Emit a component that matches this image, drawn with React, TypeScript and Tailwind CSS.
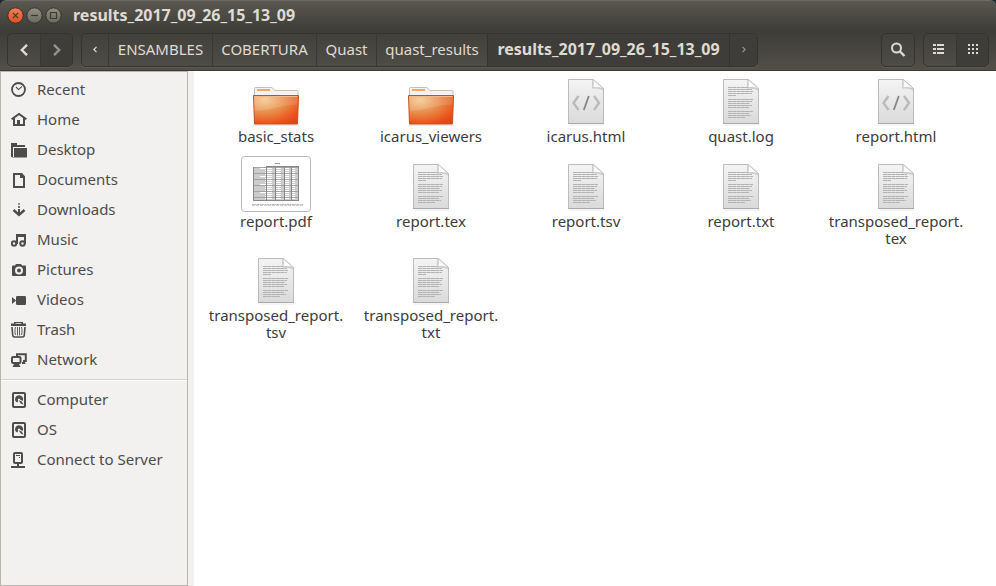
import { Fragment, useState, type ReactNode } from "react";

type IconName =
  | "recent" | "home" | "desktop" | "documents" | "downloads" | "music"
  | "pictures" | "videos" | "trash" | "network" | "drive" | "server";

const glyphs: Record<IconName, ReactNode> = {
  recent: (
    <>
      <circle cx="7.5" cy="7.5" r="6.5" fill="none" stroke="currentColor" strokeWidth="1.8" />
      <path d="M5 5l2.6 2.6L11 4.4" fill="none" stroke="currentColor" strokeWidth="1.1" />
    </>
  ),
  home: (
    <>
      <path d="M.6 7.2L8 1.9l7.4 5.3" fill="none" stroke="currentColor" strokeWidth="2" />
      <path d="M3 6v7h10V6" fill="none" stroke="currentColor" strokeWidth="2" />
      <path d="M6 13.5V8h3v5.5z" />
    </>
  ),
  desktop: (
    <>
      <path d="M0 1h6v2h8v2H2v10H0z" />
      <path d="M3 7V6h13v9.500H1V15h2z" />
    </>
  ),
  documents: (
    <>
      <path d="M3 2h7l3 3v10H3z" fill="none" stroke="currentColor" strokeWidth="2" />
      <path d="M9 1h2l3 3.500V6H9z" />
    </>
  ),
  downloads: (
    <>
      <path d="M7 1h2v2H7z" opacity=".6" />
      <path d="M7 4h2v2H7z" opacity=".8" />
      <path d="M7 7h2v4H7z" />
      <path d="M2.500 8L8 13l5.500-5" fill="none" stroke="currentColor" strokeWidth="2.400" />
    </>
  ),
  music: (
    <>
      <circle cx="3" cy="11.500" r="2.200" fill="none" stroke="currentColor" strokeWidth="2" />
      <circle cx="11.500" cy="11.500" r="2.200" fill="none" stroke="currentColor" strokeWidth="2" />
      <path d="M5 2h10v10h-2V5H7v7H5z" />
    </>
  ),
  pictures: (
    <path
      fillRule="evenodd"
      d="M5 2h5l1 1.500h3a1 1 0 0 1 1 1V13a1 1 0 0 1-1 1H2a1 1 0 0 1-1-1V4.500a1 1 0 0 1 1-1h2zM8 4.500a4 4 0 1 0 0 8 4 4 0 0 0 0-8zm0 2a2 2 0 1 1 0 4 2 2 0 0 1 0-4z"
    />
  ),
  videos: (
    <>
      <rect x="5" y="4" width="10" height="9" rx="1.200" />
      <path d="M1 5l4 3.500L1 12z" />
    </>
  ),
  trash: (
    <>
      <path d="M3 0h9v1.500h3V4H0V1.500h3zM4.500 1.200v.8h6v-.8z" fillRule="evenodd" />
      <path d="M1 5l.7 8c.1 1.200.8 2 1.800 2h8c1 0 1.700-.8 1.800-2l.7-8" fill="none" stroke="currentColor" strokeWidth="1.600" />
      <path d="M4.500 5c-.8 3-.6 5.500 0 8M6.500 5v8.500M8.500 5v8.500M10.500 5c.8 3 .6 5.500 0 8" fill="none" stroke="currentColor" strokeWidth=".9" />
    </>
  ),
  network: (
    <>
      <path d="M6 4V2.200h8.800V9H12" fill="none" stroke="currentColor" strokeWidth="2" />
      <path d="M11 10h3v1.500h1V12h-4z" />
      <rect x="1" y="5" width="8.500" height="6" rx="1" fill="none" stroke="currentColor" strokeWidth="2" />
      <path d="M3 12h5l1.500 3h-8z" />
    </>
  ),
  drive: (
    <>
      <rect x="2" y="1" width="12" height="14" rx="1" fill="none" stroke="currentColor" strokeWidth="2" />
      <path d="M8 3.200a4 4 0 0 0-3 6.600L6.500 10.500l.7-2A1.100 1.100 0 1 1 9 7.400L11.700 9A4 4 0 0 0 8 3.200z" />
      <path d="M7.800 8.200l3 1.300 1.700 3.200-2.800-1.200z" />
    </>
  ),
  server: (
    <>
      <rect x="3" y="1" width="8" height="10" rx="1" fill="none" stroke="currentColor" strokeWidth="2" />
      <path d="M5 3h4v1H5zM8 5h1v1H8zM6 11h2v3H6zM0 14h14v2H0z" />
    </>
  ),
};

const places: { label: string; icon: IconName }[] = [
  { label: "Recent", icon: "recent" },
  { label: "Home", icon: "home" },
  { label: "Desktop", icon: "desktop" },
  { label: "Documents", icon: "documents" },
  { label: "Downloads", icon: "downloads" },
  { label: "Music", icon: "music" },
  { label: "Pictures", icon: "pictures" },
  { label: "Videos", icon: "videos" },
  { label: "Trash", icon: "trash" },
  { label: "Network", icon: "network" },
];

const devices: { label: string; icon: IconName }[] = [
  { label: "Computer", icon: "drive" },
  { label: "OS", icon: "drive" },
  { label: "Connect to Server", icon: "server" },
];

type FileKind = "folder" | "html" | "text" | "pdf";

const files: { name: string; kind: FileKind }[] = [
  { name: "basic_stats", kind: "folder" },
  { name: "icarus_viewers", kind: "folder" },
  { name: "icarus.html", kind: "html" },
  { name: "quast.log", kind: "text" },
  { name: "report.html", kind: "html" },
  { name: "report.pdf", kind: "pdf" },
  { name: "report.tex", kind: "text" },
  { name: "report.tsv", kind: "text" },
  { name: "report.txt", kind: "text" },
  { name: "transposed_report.tex", kind: "text" },
  { name: "transposed_report.tsv", kind: "text" },
  { name: "transposed_report.txt", kind: "text" },
];

function PlaceList({ items }: { items: { label: string; icon: IconName }[] }) {
  return (
    <ul>
      {items.map((p) => (
        <li key={p.label}>
          <a href="#" className="flex h-[30px] items-center gap-[10px] pl-[10px]">
            <svg className="size-4 shrink-0" viewBox="0 0 16 16" fill="currentColor" aria-hidden="true">
              {glyphs[p.icon]}
            </svg>
            <span className="pb-[2px]">{p.label}</span>
          </a>
        </li>
      ))}
    </ul>
  );
}

function FolderIcon() {
  return (
    <svg className="size-12" viewBox="0 0 48 48" aria-hidden="true">
      <path d="M1 45.500h46v1.500H1z" fill="#000" opacity=".08" />
      <path d="M2.500 18V9.500q0-1 1-1H19q1 0 1.700.8l2.300 2.200h22q1 0 1 1V18z" fill="#f3f3f1" stroke="#c2c0bc" />
      <path d="M5 10h13v2H5z" fill="#f4a56c" />
      <path d="M1.500 16.500h45L45.500 45h-43z" fill="url(#folderFill)" stroke="#c6501f" />
      <path d="M2.500 17.500h43" stroke="#f3b488" />
      <path d="M2 17.500h44l-.3 8C31 26 18 31 2.400 32z" fill="#fff" opacity=".12" />
    </svg>
  );
}

const pageLines: [number, number][] = [
  [8.5, 25], [10.5, 24], [12.5, 25], [14.5, 24], [16.5, 8],
  [20.5, 25], [22.5, 24], [24.5, 22], [26.5, 24], [28.5, 21],
  [32.5, 25], [34.5, 21], [36.5, 23], [38.5, 17],
];

function PageIcon({ kind }: { kind: "html" | "text" }) {
  return (
    <svg className="size-12" viewBox="0 0 48 48" aria-hidden="true">
      <path d="M7 45.500h35v1H7z" fill="#000" opacity=".08" />
      <path d="M6.500.5h25L41.500 9.500v35h-35z" fill="url(#pageFill)" stroke="#bcbcbc" />
      <path d="M6 44.500h36" stroke="#a9a9a9" />
      {kind === "html" ? (
        <g fill="none">
          <path d="M16.500 17l-5 7 5 7M32 17l5 7-5 7" stroke="#bababa" strokeWidth="2.400" />
          <path d="M26.800 17l-5 14" stroke="#858585" strokeWidth="1.800" />
        </g>
      ) : (
        <g stroke="#b2b2b2" strokeDasharray="4 .3">
          {pageLines.map(([y, w]) => (
            <path key={y} d={`M11 ${y}h${w}`} />
          ))}
        </g>
      )}
      <path d="M30 1l1 0 10 8.500v2c-4-2-7-2-11-2z" fill="#999" opacity=".35" />
      <path d="M31 .5c.6 3 .4 6-.2 8.300 3-.5 7-.2 10.700.9z" fill="#fcfcfc" stroke="#c0c0c0" strokeWidth=".7" />
    </svg>
  );
}

function PdfThumbnail() {
  const rows = Array.from({ length: 17 }, (_, i) => 11 + i * 2);
  return (
    <svg className="h-14 w-[70px]" viewBox="0 0 70 56" aria-hidden="true">
      <rect x=".5" y=".5" width="69" height="55" rx="3" fill="#fff" stroke="#b9b8b4" />
      <path d="M34 7.500h5" stroke="#999" />
      <path d="M25 10.500h33" stroke="#888" />
      {rows.map((y, i) => (
        <g key={y}>
          <path d={`M12 ${y + 0.5}h46`} stroke={i % 3 === 0 ? "#a5a5a5" : "#cecece"} />
          <path d={`M13 ${y + 1.5}h${i % 4 === 0 ? 6 : 11}M31 ${y + 1.5}h3M40 ${y + 1.5}h3M48 ${y + 1.5}h3M54 ${y + 1.5}h3`} stroke="#999" opacity=".5" />
        </g>
      ))}
      <path d="M12.500 11v34M25.500 10v35M34.500 10v35M43.500 10v35M50.500 10v35M57.500 10v35M12 44.500h46" fill="none" stroke="#888" />
      <path d="M11 48.500h51" stroke="#b4b4b4" strokeDasharray="2 .5" />
      <path d="M11 49.500h51" stroke="#ccc" strokeDasharray="3 1" />
    </svg>
  );
}

function FileIcon({ kind }: { kind: FileKind }) {
  if (kind === "folder") return <FolderIcon />;
  if (kind === "pdf") return <PdfThumbnail />;
  return <PageIcon kind={kind} />;
}

/* Lets a long file name break after its dots. */
function FileName({ name }: { name: string }) {
  return (
    <span className="max-w-[140px] pt-px pb-[11px] text-center">
      {name.split(".").map((part, i) => (
        <Fragment key={i}>
          {i > 0 && (
            <>
              .<wbr />
            </>
          )}
          {part}
        </Fragment>
      ))}
    </span>
  );
}

const groupClass =
  "flex h-[34px] overflow-hidden rounded-[5px] border border-[#34332f] bg-linear-to-b from-[#42413c] to-[#4e4c46] shadow-[0_1px_0_#5c5a53]";
const pressedClass = "bg-[#3e3d39]";

const crumbs = [
  { label: "ENSAMBLES", width: "w-[104px]" },
  { label: "COBERTURA", width: "w-[104px]" },
  { label: "Quast", width: "w-[60px]" },
  { label: "quast_results", width: "w-[111px]" },
];

function Chevron({ dir, small, dim }: { dir: "left" | "right"; small?: boolean; dim?: boolean }) {
  return (
    <svg
      className={small ? "h-[7px] w-1" : "h-3 w-2"}
      viewBox="0 0 8 12"
      fill="none"
      stroke={dim ? "#96948c" : "#dfdbd2"}
      strokeWidth="2.400"
      aria-hidden="true"
    >
      <path d={dir === "left" ? "M7 .8L1.800 6 7 11.200" : "M1 .8L6.200 6 1 11.200"} />
    </svg>
  );
}

function WindowButton({ label, fill, d }: { label: string; fill: string; d: string }) {
  return (
    <button aria-label={label} className="size-[17px]">
      <svg viewBox="0 0 17 17" aria-hidden="true">
        <circle cx="8.500" cy="8.500" r="7.700" fill={fill} stroke="#34332f" />
        <path d={d} fill="none" stroke="#3a3934" strokeWidth="1.200" />
      </svg>
    </button>
  );
}

export default function App() {
  const [view, setView] = useState<"list" | "grid">("grid");
  return (
    <div className="flex h-screen flex-col bg-white font-['Noto_Sans',sans-serif] text-[15px] leading-[17px] text-[#4c4c4c]">
      <svg className="absolute size-0" aria-hidden="true">
        <defs>
          <radialGradient id="folderFill" cx=".25" cy=".15" r="1">
            <stop offset="0" stopColor="#f5cb92" />
            <stop offset=".45" stopColor="#e88e4b" />
            <stop offset=".85" stopColor="#ec5019" />
            <stop offset="1" stopColor="#dc4a17" />
          </radialGradient>
          <linearGradient id="pageFill" x1="0" y1="0" x2="0" y2="1">
            <stop offset="0" stopColor="#f4f4f4" />
            <stop offset="1" stopColor="#dadada" />
          </linearGradient>
          <linearGradient id="closeFill" x1="0" y1="0" x2="0" y2="1">
            <stop offset="0" stopColor="#f58059" />
            <stop offset="1" stopColor="#e2511d" />
          </linearGradient>
          <linearGradient id="plainFill" x1="0" y1="0" x2="0" y2="1">
            <stop offset="0" stopColor="#92907f" />
            <stop offset="1" stopColor="#6a6861" />
          </linearGradient>
        </defs>
      </svg>

      <div className="shrink-0 bg-[#1a2a30]">
        <header className="flex h-[29px] items-center rounded-t-[6px] border-t border-[#6b6961] bg-linear-to-b from-[#5a5850] to-[#3f3e39] pl-[7px]">
          <div className="flex gap-[2px]">
            <WindowButton label="Close" fill="url(#closeFill)" d="M5.800 5.800l5.400 5.400M11.200 5.800l-5.400 5.400" />
            <WindowButton label="Minimize" fill="url(#plainFill)" d="M5 8.500h7" />
            <WindowButton label="Maximize" fill="url(#plainFill)" d="M5.500 5.500h6v6h-6z" />
          </div>
          <h1 className="pl-[11px] text-[16px] font-bold text-[#dfdbd2]">results_2017_09_26_15_13_09</h1>
        </header>
      </div>

      <nav className="flex h-[42px] shrink-0 items-center border-b border-[#3c3b37] bg-linear-to-b from-[#3d3c38] to-[#524f48] pr-[7px] pl-[7px] text-[#dfdbd2]">
        <div className={groupClass}>
          <button aria-label="Back" className="flex w-8 items-center justify-center">
            <Chevron dir="left" />
          </button>
          <button aria-label="Forward" className={`flex w-8 items-center justify-center border-l border-[#383733] ${pressedClass}`}>
            <Chevron dir="right" dim />
          </button>
        </div>

        <div className={`ml-2 ${groupClass}`}>
          <button aria-label="Scroll path left" className="flex w-[26px] items-center justify-center">
            <Chevron dir="left" small />
          </button>
          {crumbs.map((c) => (
            <button key={c.label} className={`flex items-center justify-center border-l border-[#383733] ${c.width}`}>
              {c.label}
            </button>
          ))}
          <button className={`flex w-[242px] items-center justify-center border-l border-[#34332f] text-[16px] font-bold ${pressedClass}`}>
            results_2017_09_26_15_13_09
          </button>
          <button aria-label="Scroll path right" className={`flex w-7 items-center justify-center border-l border-[#34332f] ${pressedClass}`}>
            <Chevron dir="right" small dim />
          </button>
        </div>

        <div className={`ml-auto ${groupClass}`}>
          <button aria-label="Search" className="flex w-8 items-center justify-center">
            <svg className="size-4" viewBox="0 0 16 16" fill="none" stroke="currentColor" aria-hidden="true">
              <circle cx="6.500" cy="6" r="4.500" strokeWidth="2" />
              <path d="M10 9.500l4.500 4.500" strokeWidth="2.400" />
            </svg>
          </button>
        </div>

        <div className={`ml-2 ${groupClass}`}>
          <button
            aria-label="List view"
            aria-pressed={view === "list"}
            onClick={() => setView("list")}
            className={`flex w-8 items-center justify-center ${view === "list" ? pressedClass : ""}`}
          >
            <svg className="size-4" viewBox="0 0 16 16" fill="currentColor" aria-hidden="true">
              <path d="M1 2h3v2H1zM5 2h7v2H5zM1 6h3v2H1zM5 6h7v2H5zM1 10h3v2H1zM5 10h7v2H5z" />
            </svg>
          </button>
          <button
            aria-label="Icon view"
            aria-pressed={view === "grid"}
            onClick={() => setView("grid")}
            className={`flex w-8 items-center justify-center border-l border-[#383733] ${view === "grid" ? pressedClass : ""}`}
          >
            <svg className="size-4" viewBox="0 0 16 16" fill="currentColor" aria-hidden="true">
              <path d="M3 2h2v2H3zM7 2h2v2H7zM11 2h2v2h-2zM3 6h2v2H3zM7 6h2v2H7zM11 6h2v2h-2zM3 10h2v2H3zM7 10h2v2H7zM11 10h2v2h-2z" />
            </svg>
          </button>
        </div>
      </nav>

      <div className="flex min-h-0 flex-1">
        <div className="flex bg-[#f2f1f0] pr-[6px]">
          <aside className="w-[188px] border border-[#b8b4ae] pt-[3px]">
            <PlaceList items={places} />
            <hr className="my-1 h-[2px] border-t border-b border-t-[#d6d3d0] border-b-white" />
            <PlaceList items={devices} />
          </aside>
        </div>
        <main className="flex-1 overflow-auto pt-2 pl-[5px] text-[#3c3c3c]">
          <ul className="grid grid-cols-[repeat(auto-fill,154px)] gap-x-px">
            {files.map((f) => (
              <li key={f.name} className="row-span-2 grid grid-rows-subgrid justify-items-center">
                <div className="self-end">
                  <FileIcon kind={f.kind} />
                </div>
                <FileName name={f.name} />
              </li>
            ))}
          </ul>
        </main>
      </div>
    </div>
  );
}
